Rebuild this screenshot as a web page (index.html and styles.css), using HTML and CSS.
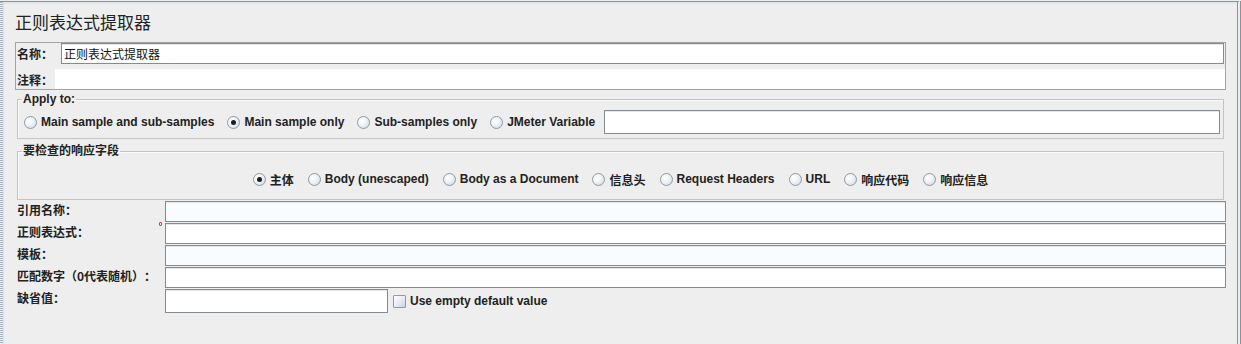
FILE: index.html
```html
<!DOCTYPE html>
<html>

<head>
	<meta charset="utf-8">
	<link rel="stylesheet" href="styles.css">
</head>

<body>
	<div class="frame">
		<div class="panel">
			<h1 class="title">正则表达式提取器</h1>

			<div class="nameBox">
				<div class="nameRow">
					<label class="label nameLabel">名称：</label>
					<input class="field nameField" value="正则表达式提取器" />
				</div>
				<div class="commentRow">
					<label class="label commentLabel">注释：</label>
					<div class="commentArea"></div>
				</div>
			</div>

			<fieldset class="group applyGroup">
				<legend>Apply to:</legend>
				<div class="radioRow applyRow">
					<label class="option"><input type="radio" name="apply" />Main sample and sub-samples</label>
					<label class="option"><input type="radio" name="apply" checked />Main sample only</label>
					<label class="option"><input type="radio" name="apply" />Sub-samples only</label>
					<label class="option"><input type="radio" name="apply" />JMeter Variable</label>
					<input class="field varField" />
				</div>
			</fieldset>

			<fieldset class="group scopeGroup">
				<legend>要检查的响应字段</legend>
				<div class="radioRow centerRow">
					<label class="option"><input type="radio" name="scope" checked />主体</label>
					<label class="option"><input type="radio" name="scope" />Body (unescaped)</label>
					<label class="option"><input type="radio" name="scope" />Body as a Document</label>
					<label class="option"><input type="radio" name="scope" />信息头</label>
					<label class="option"><input type="radio" name="scope" />Request Headers</label>
					<label class="option"><input type="radio" name="scope" />URL</label>
					<label class="option"><input type="radio" name="scope" />响应代码</label>
					<label class="option"><input type="radio" name="scope" />响应信息</label>
				</div>
			</fieldset>

			<div class="formGrid">
				<span class="mark"></span>
				<label class="label">引用名称：</label>
				<input class="field tinted" />
				<label class="label">正则表达式：</label>
				<input class="field" />
				<label class="label">模板：</label>
				<input class="field tinted" />
				<label class="label">匹配数字（0代表随机）：</label>
				<input class="field" />
				<label class="label">缺省值：</label>
				<div class="defaultRow">
					<input class="field defaultField" />
					<label class="option checkOption"><input type="checkbox" />Use empty default value</label>
				</div>
			</div>
		</div>
	</div>
</body>

</html>
```

FILE: styles.css
```css
html,
body {
	margin: 0;
	padding: 0;
	background-color: #eeeeee;
}

body {
	font-family: "Liberation Sans", "Noto Sans CJK SC", sans-serif;
	font-size: 12px;
	color: #333333;
	text-spacing-trim: space-all;
}

.frame {
	width: 1241px;
	height: 343px;
	box-sizing: border-box;
	margin-top: 1px;
	padding-left: 3px;
	border-top: 1px solid #8a929c;
	border-right: 4px double #8a929c;
	background: repeating-linear-gradient(to bottom, #aab3bd 0 1px, #eeeeee 1px 2px) left top / 3px 100% no-repeat, #eeeeee;
}

.panel {
	height: 100%;
	box-sizing: border-box;
	border-top: 2px solid #dfe7f0;
	border-left: 1px solid #dde1e5;
	padding: 8px 11px 0 11px;
}

.title {
	margin: 0 0 10px 0;
	font-size: 17px;
	line-height: 20px;
	font-weight: normal;
	color: #222222;
	font-family: "Noto Sans CJK SC", sans-serif;
}

.label {
	font-family: "Noto Sans CJK SC", sans-serif;
	font-weight: bold;
	font-size: 12px;
	color: #222222;
	white-space: nowrap;
}

.field {
	box-sizing: border-box;
	height: 21px;
	margin: 0;
	padding: 0 2px;
	border: 1px solid #858b92;
	box-shadow: inset 0 1px 0 #e4e6e8;
	background-color: #ffffff;
	font-family: "Noto Sans CJK SC", sans-serif;
	font-size: 12px;
	color: #111111;
	outline: none;
}

.tinted {
	background-color: #f9fcff;
}

/* name / comment box */

.nameBox {
	border: 1px solid #a3a3a3;
	padding-left: 1px;
}

.nameRow {
	display: flex;
	align-items: center;
	padding-right: 1px;
}

.nameLabel {
	width: 44px;
}

.nameField {
	flex: 1;
}

.commentRow {
	display: flex;
	align-items: center;
	margin-top: 5px;
}

.commentLabel {
	width: 38px;
}

.commentArea {
	flex: 1;
	height: 20px;
	background-color: #ffffff;
}

/* grouped radios */

.group {
	margin: 0 2px;
	border: 1px solid #c4c4c4;
	box-shadow: inset 1px 1px 0 #fafafa;
	min-width: 0;
}

.group legend {
	padding: 0 1px;
	margin-left: -2px;
	font-weight: bold;
	line-height: 15px;
	color: #222222;
}

.applyGroup {
	margin-top: 2px;
	padding: 3px 3px 4px 6px;
}

.scopeGroup {
	margin-top: 5px;
	padding: 12px 6px 12px 6px;
}

.radioRow {
	display: flex;
	align-items: center;
	gap: 14px;
}

.applyRow {
	gap: 13px;
}

.centerRow {
	justify-content: center;
	height: 16px;
}

.option {
	display: flex;
	align-items: center;
	gap: 4px;
	font-weight: bold;
	white-space: nowrap;
	color: #222222;
}

.option input[type=radio],
.option input[type=checkbox] {
	appearance: none;
	-webkit-appearance: none;
	margin: 0;
	width: 13px;
	height: 13px;
	box-sizing: border-box;
	border: 1px solid #8f9aa6;
	background: radial-gradient(circle at 35% 35%, #ffffff 0, #eef2f7 45%, #c9d3de 100%);
	position: relative;
	flex: none;
}

.option input[type=radio] {
	border-radius: 50%;
}

.option input[type=radio]:checked::after {
	content: "";
	position: absolute;
	left: 3px;
	top: 3px;
	width: 5px;
	height: 5px;
	border-radius: 50%;
	background-color: #1e1e1e;
}

.option input[type=checkbox] {
	border-radius: 1px;
	background: linear-gradient(135deg, #ffffff 0, #e6edf5 50%, #c6d3e2 100%);
}

.varField {
	flex: 1;
	height: 24px;
	margin-left: -4px;
}

/* extractor fields */

.formGrid {
	position: relative;
	display: grid;
	grid-template-columns: 148px 1fr;
	row-gap: 1px;
	margin-top: 1px;
	padding-left: 2px;
}

.formGrid .label {
	line-height: 17px;
}

.defaultRow {
	display: flex;
	align-items: center;
	height: 24px;
}

.defaultField {
	width: 223px;
	height: 24px;
}

.checkOption {
	margin-left: 5px;
}

.mark {
	position: absolute;
	left: 144px;
	top: 21px;
	width: 1px;
	height: 2px;
	border: 1px solid #d04040;
	border-radius: 1px;
}
```
